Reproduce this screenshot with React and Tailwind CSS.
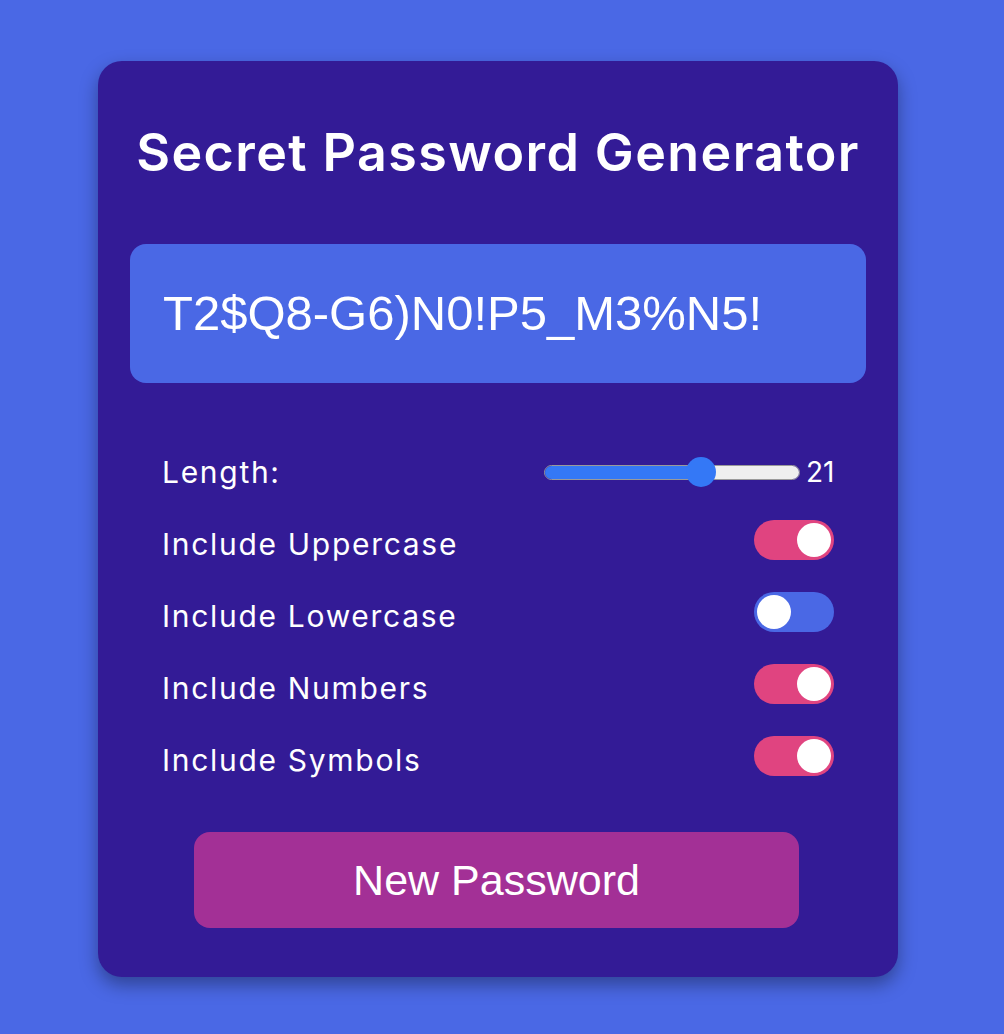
import { useState } from 'react';

const OPTIONS = [
  { key: 'upper', label: 'Include Uppercase', on: true },
  { key: 'lower', label: 'Include Lowercase', on: false },
  { key: 'numbers', label: 'Include Numbers', on: true },
  { key: 'symbols', label: 'Include Symbols', on: true },
];

function Toggle({ on, onClick }) {
  return (
    <button
      type="button"
      onClick={onClick}
      className={`-mt-[8px] flex w-[80px] h-[40px] rounded-full p-[3px] ${on ? 'bg-[#e04480] justify-end' : 'bg-[#4a68e5] justify-start'}`}
    >
      <span className="block size-[34px] rounded-full bg-white" />
    </button>
  );
}

function Slider({ value, min, max }) {
  // thumb centre runs from 15px to (width - 15px) of the track
  const frac = (value - min) / (max - min);
  return (
    <div className="relative w-[256px] h-[30px] flex items-center">
      <div className="flex w-full h-[15px] rounded-full overflow-hidden border border-[#9a9a9a]">
        <div className="bg-[#3478f6]" style={{ width: `calc(15px + ${frac} * (100% - 30px))` }} />
        <div className="flex-1 bg-[#efefef]" />
      </div>
      <div
        className="absolute top-0 size-[30px] rounded-full bg-[#3478f6]"
        style={{ left: `calc(${frac} * (100% - 30px))` }}
      />
    </div>
  );
}

export default function App() {
  const [opts, setOpts] = useState(() => Object.fromEntries(OPTIONS.map((o) => [o.key, o.on])));

  return (
    <div className="min-h-[1034px] bg-[#4a68e5] pt-[61px] pl-[98px]">
      <div className="w-[800px] rounded-[24px] bg-[#331b96] shadow-[0_8px_18px_rgba(0,0,0,0.35)] px-8 pt-[63px] pb-[49px] flex flex-col">
        <h1 className="text-center text-white text-[52px] leading-[58px] tracking-[1.4px] font-semibold font-['Inter',sans-serif]">
          Secret Password Generator
        </h1>

        <div className="mt-[62px] h-[139px] rounded-[16px] bg-[#4a68e5] flex items-center px-[33px]">
          <span className="text-white text-[49px] font-['Liberation_Sans',Arial,sans-serif]">T2$Q8-G6)N0!P5_M3%N5!</span>
        </div>

        <div className="mt-[53px] px-8 flex flex-col font-['Inter',sans-serif] text-white text-[30px] tracking-[1.7px]">
          <div className="h-[72px] flex items-center justify-between">
            <span>Length:</span>
            <div className="flex items-center gap-[6px] tracking-normal">
              <Slider value={21} min={4} max={31} />
              <span className="w-[28px] text-[28px]">21</span>
            </div>
          </div>
          {OPTIONS.map((o) => (
            <div key={o.key} className="h-[72px] flex items-center justify-between">
              <span>{o.label}</span>
              <Toggle on={opts[o.key]} onClick={() => setOpts((p) => ({ ...p, [o.key]: !p[o.key] }))} />
            </div>
          ))}
        </div>

        <button
          type="button"
          className="mt-[36px] ml-[64px] w-[605px] h-[96px] rounded-[16px] bg-[#a33096] text-white text-[43px] font-['Liberation_Sans',Arial,sans-serif]"
        >
          New Password
        </button>
      </div>
    </div>
  );
}
